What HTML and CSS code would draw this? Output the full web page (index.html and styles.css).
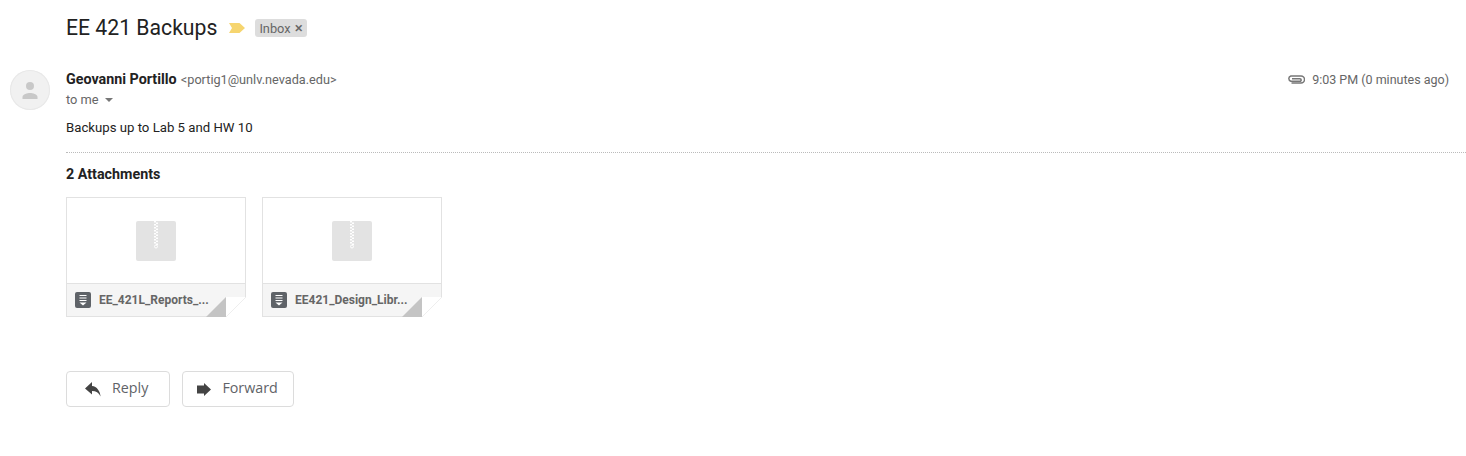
FILE: index.html
```html
<!DOCTYPE html>

<html lang="en-US">

<head>
	<meta charset="UTF-8" />
	<title>EE 421 Backups</title>
	<link rel="stylesheet" href="styles.css">
</head>

<body>
	<div class="subject">
		<h1>EE 421 Backups</h1>
		<svg class="marker" width="16" height="10" viewBox="0 0 16 10"><path d="M0 0H10.500L16 5L10.500 10H0L3 5Z" fill="#f6d56f"/></svg>
		<span class="label">Inbox <span class="label-x">×</span></span>
	</div>

	<div class="message">
		<div class="avatar">
			<svg width="40" height="40" viewBox="0 0 40 40"><circle cx="20" cy="16" r="4" fill="#c8c8c8"/><path d="M12.500 29v-2c0-2.600 5-4 7.500-4s7.500 1.400 7.500 4v2z" fill="#c8c8c8"/></svg>
		</div>
		<div class="content">
			<div class="head">
				<div>
					<div class="from"><b>Geovanni Portillo</b> <span class="addr">&lt;portig1@unlv.nevada.edu&gt;</span></div>
					<div class="to">to me <span class="caret"></span></div>
				</div>
				<div class="when">
					<svg width="18" height="9" viewBox="0 0 18 9"><path d="M4.500 8h9.500a3.200 3.200 0 0 0 0-7H3.800a2.700 2.700 0 0 0 0 5.200H13a1.200 1.200 0 0 0 0-2.400H5" fill="none" stroke="#777" stroke-width="1.500"/></svg>
					<span>9:03 PM (0 minutes ago)</span>
				</div>
			</div>
			<p class="body-text">Backups up to Lab 5 and HW 10</p>
			<div class="attachments">
				<div class="att-title">2 Attachments</div>
				<div class="att-list">
					<div class="card">
						<div class="preview">
							<svg width="40" height="40" viewBox="0 0 40 40"><rect width="40" height="40" rx="2" fill="#e3e3e3"/><path d="M19 0v24" stroke="#fff" stroke-width="2" stroke-dasharray="1.500 1.500"/><path d="M21 1.500v22.500" stroke="#fff" stroke-width="2" stroke-dasharray="1.500 1.500"/><circle cx="20" cy="25.500" r="1.500" fill="none" stroke="#fff"/></svg>
						</div>
						<div class="card-foot">
							<svg width="16" height="16" viewBox="0 0 16 16"><rect width="16" height="16" rx="2" fill="#5f6368"/><path d="M4.500 3.500h7M4.500 6h7M4.500 8.500h7" stroke="#fff" stroke-width="1.200"/><path d="M4.500 10.500h7L8 13.500z" fill="#fff"/></svg>
							<span class="fname">EE_421L_Reports_...</span>
						</div>
						<div class="fold"></div>
					</div>
					<div class="card">
						<div class="preview">
							<svg width="40" height="40" viewBox="0 0 40 40"><rect width="40" height="40" rx="2" fill="#e3e3e3"/><path d="M19 0v24" stroke="#fff" stroke-width="2" stroke-dasharray="1.500 1.500"/><path d="M21 1.500v22.500" stroke="#fff" stroke-width="2" stroke-dasharray="1.500 1.500"/><circle cx="20" cy="25.500" r="1.500" fill="none" stroke="#fff"/></svg>
						</div>
						<div class="card-foot">
							<svg width="16" height="16" viewBox="0 0 16 16"><rect width="16" height="16" rx="2" fill="#5f6368"/><path d="M4.500 3.500h7M4.500 6h7M4.500 8.500h7" stroke="#fff" stroke-width="1.200"/><path d="M4.500 10.500h7L8 13.500z" fill="#fff"/></svg>
							<span class="fname">EE421_Design_Libr...</span>
						</div>
						<div class="fold"></div>
					</div>
				</div>
			</div>
			<div class="actions">
				<a class="btn reply">
					<svg width="16" height="15" viewBox="0 0 16 15"><path d="M7 0L0 6.500l7 6V9c4 0 6.800 1.800 8.600 5.500C15 9 12 4.500 7 4z" fill="#444"/></svg>
					<span>Reply</span>
				</a>
				<a class="btn forward">
					<svg width="14" height="13" viewBox="0 0 14 13"><path d="M7 0l7 6.500L7 13V10.500H0v-8h7z" fill="#444"/></svg>
					<span>Forward</span>
				</a>
			</div>
		</div>
	</div>
</body>

</html>
```
FILE: styles.css
```css
body {
	margin: 0;
	font-family: Roboto, sans-serif;
	font-size: 12.8px;
	color: #222;
	background-color: #fff;
	overflow: hidden;
}

.subject {
	display: flex;
	align-items: center;
	height: 28px;
	padding: 14px 0 0 66px;
}

h1 {
	margin: -1px 0 0;
	font-size: 21.200px;
	font-weight: 400;
	color: #222;
}

.marker {
	margin-left: 12px;
}

.label {
	margin-left: 10px;
	padding: 0 4px;
	height: 18px;
	line-height: 18px;
	border-radius: 3px;
	background-color: #ddd;
	color: #666;
}

.label-x {
	margin-left: 1px;
	font-size: 15px;
	font-weight: 500;
}

.message {
	display: flex;
	padding: 28px 0 0 10px;
}

.avatar {
	width: 40px;
	height: 40px;
	flex: none;
	border-radius: 50%;
	background-color: #f1f1f1;
	box-shadow: inset 0 0 0 1px #e8e8e8;
}

.content {
	flex: 1;
	margin-left: 16px;
}

.head {
	display: flex;
	justify-content: space-between;
}

.from {
	height: 18px;
	line-height: 17px;
	margin-top: 1px;
}

.from b {
	margin-right: 1px;
	font-size: 14.300px;
	font-weight: 700;
}

.addr {
	font-size: 12.700px;
	color: #666;
}

.to {
	height: 16px;
	line-height: 16px;
	margin-top: 3px;
	color: #666;
}

.caret {
	display: inline-block;
	margin: 0 0 2px 3px;
	border: 4px solid transparent;
	border-top-color: #777;
	border-bottom: 0;
}

.when {
	display: flex;
	align-items: center;
	gap: 7px;
	height: 18px;
	margin: 0 17px 0 0;
	font-size: 12.500px;
	color: #666;
}

.body-text {
	margin: 11px 0 0;
	height: 18px;
	line-height: 18px;
	font-size: 13.200px;
}

.attachments {
	margin-top: 15px;
	border-top: 1px dotted #bbb;
}

.att-title {
	margin-top: 13px;
	font-size: 14.300px;
	font-weight: 700;
	height: 16px;
	line-height: 16px;
}

.att-list {
	display: flex;
	gap: 16px;
	margin-top: 15px;
}

.card {
	position: relative;
	width: 180px;
	height: 120px;
	box-sizing: border-box;
	border: 1px solid #e2e2e2;
}

.preview {
	display: flex;
	justify-content: center;
	align-items: center;
	height: 86px;
	box-sizing: border-box;
	padding-top: 1px;
	border-bottom: 1px solid #e2e2e2;
}

.card-foot {
	display: flex;
	align-items: center;
	gap: 8px;
	height: 32px;
	padding: 0 0 0 8px;
	background-color: #f5f5f5;
	font-size: 12px;
}

.fname {
	font-weight: 700;
	color: #666;
}

.fold {
	position: absolute;
	right: -1px;
	bottom: -1px;
	width: 40px;
	height: 20px;
	background:
		linear-gradient(to bottom right, transparent 49%, #c4c4c4 51%) 0 0 / 20px 20px no-repeat,
		linear-gradient(to bottom right, #fff 49%, #eee 50%, #fff 52%) 20px 0 / 20px 20px no-repeat;
}

.actions {
	display: flex;
	gap: 12px;
	margin-top: 54px;
}

.btn {
	display: flex;
	align-items: center;
	gap: 11px;
	height: 36px;
	box-sizing: border-box;
	border: 1px solid #dcdcdc;
	border-radius: 4px;
	font-family: "Open Sans", sans-serif;
	font-size: 14.300px;
	font-weight: 500;
	color: #5f6368;
}

.btn span {
	margin-top: -3px;
}

.reply {
	padding: 0 21px 0 18px;
}

.forward {
	padding: 0 15px 0 14px;
}
```
